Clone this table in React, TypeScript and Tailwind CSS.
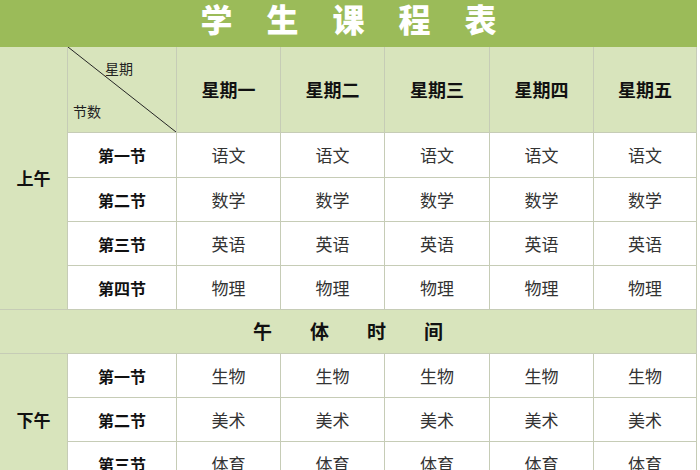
import React from "react";

const days = ["星期一", "星期二", "星期三", "星期四", "星期五"];
const morning = [
  ["第一节", "语文"],
  ["第二节", "数学"],
  ["第三节", "英语"],
  ["第四节", "物理"],
];
const afternoon = [
  ["第一节", "生物"],
  ["第二节", "美术"],
  ["第三节", "体育"],
];

const font = { fontFamily: '"Noto Sans CJK SC", "Noto Sans", sans-serif' };

function Row({ label, subject }: { label: string; subject: string }) {
  return (
    <>
      <div className="flex items-center justify-center border-r border-b border-[#c6ccb6] bg-white text-[16px] font-bold text-[#111]">
        {label}
      </div>
      {days.map((d) => (
        <div
          key={d}
          className="flex items-center justify-center border-r border-b border-[#c6ccb6] bg-white text-[17px] text-[#333]"
        >
          {subject}
        </div>
      ))}
    </>
  );
}

export default function App() {
  return (
    <div className="h-[470px] w-[700px] overflow-hidden bg-white" style={font}>
      <div className="w-[697px]">
        <div className="flex h-[47px] items-start justify-center gap-[34px] bg-[#9bbb59] pt-[1px] text-[32px] font-black leading-[34px] text-white">
          {"学生课程表".split("").map((c) => (
            <span key={c}>{c}</span>
          ))}
        </div>
        <div className="grid grid-cols-[68px_109px_104px_104px_105px_104px_103px] grid-rows-[86px_45px_44px_44px_44px_44px_44px_44px_44px]">
          <div className="row-span-5 flex items-center justify-center border-r border-b border-[#c6ccb6] bg-[#d8e4bc] text-[17px] font-bold text-[#111]">
            上午
          </div>
          <div className="relative border-r border-b border-[#c6ccb6] bg-[#d8e4bc] text-[14px] text-[#222]">
            <svg className="absolute inset-0 h-full w-full" viewBox="0 0 109 86" preserveAspectRatio="none">
              <line x1="0" y1="0" x2="109" y2="86" stroke="#222" strokeWidth="1" />
            </svg>
            <span className="absolute left-[37px] top-[13px] leading-[16px]">星期</span>
            <span className="absolute left-[5px] top-[56px] leading-[16px]">节数</span>
          </div>
          {days.map((d) => (
            <div
              key={d}
              className="flex items-center justify-center border-r border-b border-[#c6ccb6] bg-[#d8e4bc] text-[18px] font-bold text-[#111]"
            >
              {d}
            </div>
          ))}
          {morning.map(([l, s]) => (
            <Row key={l} label={l} subject={s} />
          ))}
          <div className="col-span-7 flex items-center justify-center gap-[38px] border-r border-b border-[#c6ccb6] bg-[#d8e4bc] text-[19px] font-bold text-[#111]">
            {"午体时间".split("").map((c) => (
              <span key={c}>{c}</span>
            ))}
          </div>
          <div className="row-span-3 flex items-center justify-center border-r border-b border-[#c6ccb6] bg-[#d8e4bc] text-[17px] font-bold text-[#111]">
            下午
          </div>
          {afternoon.map(([l, s], i) => (
            <React.Fragment key={l}>
              {i === 0 ? null : null}
              <div className="flex items-center justify-center border-r border-b border-[#c6ccb6] bg-white text-[16px] font-bold text-[#111]">
                {l}
              </div>
              {days.map((d) => (
                <div
                  key={d}
                  className="flex items-center justify-center border-r border-b border-[#c6ccb6] bg-white text-[17px] text-[#333]"
                >
                  {s}
                </div>
              ))}
            </React.Fragment>
          ))}
        </div>
      </div>
    </div>
  );
}
